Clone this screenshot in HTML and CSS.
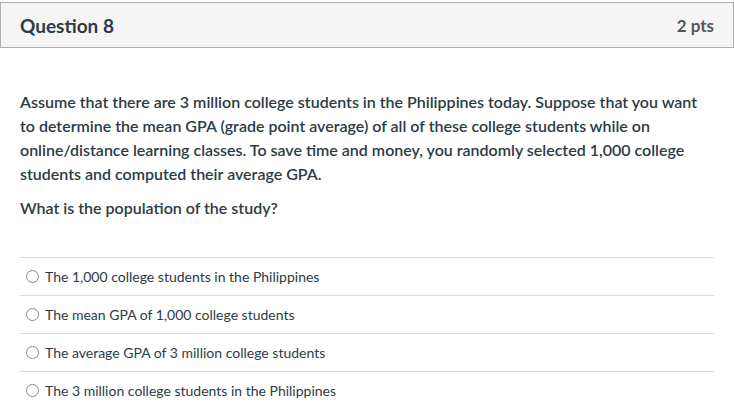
FILE: index.html
```html
<!DOCTYPE html>
<html>
<head>
<meta charset="utf-8">
<link rel="stylesheet" href="styles.css">
</head>
<body>
<div class="question">
  <div class="header">
    <span class="title">Question 8</span>
    <span class="pts">2 pts</span>
  </div>
  <div class="content">
    <p class="text">Assume that there are 3 million college students in the Philippines today. Suppose that you want to determine the mean GPA (grade point average) of all of these college students while on online/distance learning classes. To save time and money, you randomly selected 1,000 college students and computed their average GPA.</p>
    <p class="text ask">What is the population of the study?</p>
    <div class="answers">
      <label class="answer"><span class="radio"></span><span>The 1,000 college students in the Philippines</span></label>
      <label class="answer"><span class="radio"></span><span>The mean GPA of 1,000 college students</span></label>
      <label class="answer"><span class="radio"></span><span>The average GPA of 3 million college students</span></label>
      <label class="answer"><span class="radio"></span><span>The 3 million college students in the Philippines</span></label>
    </div>
  </div>
</div>
</body>
</html>
```
FILE: styles.css
```css
html, body {
  margin: 0;
  padding: 0;
  background: #fff;
}
body {
  font-family: Lato, "Liberation Sans", sans-serif;
  color: #2d3b45;
}
.question {
  padding-top: 2px;
}
.header {
  display: flex;
  justify-content: space-between;
  align-items: center;
  height: 44px;
  background: #f5f5f5;
  border: 1px solid #aeaeae;
  padding: 0 19px 0 19px;
}
.title {
  font-size: 19px;
  font-weight: 700;
  color: #2d3b45;
}
.pts {
  font-size: 17px;
  font-weight: 700;
  color: #555;
}
.content {
  padding: 42px 20px 0 20px;
}
.text {
  margin: 0;
  font-size: 16px;
  font-weight: 600;
  line-height: 24px;
}
.ask {
  margin-top: 10px;
}
.answers {
  margin-top: 37px;
}
.answer {
  display: flex;
  align-items: center;
  height: 37px;
  border-top: 1px solid #dcdcdc;
  font-size: 14px;
  color: #2d3b45;
}
.radio {
  width: 11px;
  height: 11px;
  border: 1px solid #8a8a8a;
  border-radius: 50%;
  margin: 0 6px 0 6px;
  background: #fff;
}
```
